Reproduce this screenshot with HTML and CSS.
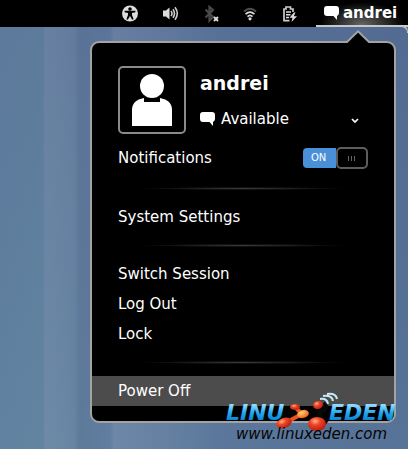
FILE: index.html
```html
<!DOCTYPE html>
<html lang="en">
<head>
    <meta charset="UTF-8">
    <meta name="viewport" content="width=device-width, initial-scale=1.0">
    <title>User Menu</title>
    <link rel="stylesheet" href="styles.css">
</head>
<body>
    <header class="panel">
        <button class="panel-icon" type="button" aria-label="Accessibility">
            <svg width="18" height="18" viewBox="0 0 18 18">
                <circle cx="9" cy="8.5" r="8" fill="#ddd"/>
                <circle cx="9" cy="4" r="1.8" fill="#000"/>
                <path d="M3.6 5.8 L14.4 5.8 L14.4 7.2 L11 8 L11 10 L12.6 14.2 L11.2 14.8 L9 11 L6.8 14.8 L5.4 14.2 L7 10 L7 8 L3.6 7.2 Z" fill="#000"/>
            </svg>
        </button>
        <button class="panel-icon" type="button" aria-label="Volume">
            <svg width="18" height="18" viewBox="0 0 18 18">
                <path d="M2 5.5 H5 L8.5 2.5 V14.5 L5 11.5 H2 Z" fill="#ddd"/>
                <path d="M10 6 Q12 8.5 10 11 M12 4.3 Q15 8.5 12 12.7 M14 2.3 Q18.6 8.5 14 14.7" fill="none" stroke="#ccc" stroke-width="1.6"/>
            </svg>
        </button>
        <button class="panel-icon" type="button" aria-label="Bluetooth off">
            <svg width="18" height="18" viewBox="0 0 18 18">
                <path d="M4.5 4.5 L12 12 L8.5 15.5 V2 L12 5 L4.5 12.5" fill="none" stroke="#494949" stroke-width="2.2"/>
                <path d="M13 12 L17 16 M17 12 L13 16" stroke="#ddd" stroke-width="1.9"/>
            </svg>
        </button>
        <button class="panel-icon" type="button" aria-label="Wireless network">
            <svg width="18" height="18" viewBox="0 0 18 18">
                <path d="M3 6.5 Q9 1 15 6.5" fill="none" stroke="#505050" stroke-width="2"/>
                <path d="M4.6 9.2 Q9 5 13.4 9.2 M6.5 11.6 Q9 9.2 11.5 11.6" fill="none" stroke="#ddd" stroke-width="1.8"/>
                <circle cx="9" cy="13.8" r="1.6" fill="#ddd"/>
            </svg>
        </button>
        <button class="panel-icon" type="button" aria-label="Battery charging">
            <svg width="18" height="18" viewBox="0 0 18 18">
                <path d="M8.5 15.7 H3 V4 H5 V2 H9.5 V4 H12 V7" fill="none" stroke="#ccc" stroke-width="1.7"/>
                <path d="M5 7 H10 M5 9.7 H9.5 M5 12.4 H8" stroke="#ddd" stroke-width="1.5"/>
                <path d="M13 7.5 L8.5 12.8 H11.5 L10.5 17 L16 11.2 H12.8 L14.5 7.5 Z" fill="#ddd"/>
            </svg>
        </button>
        <button class="panel-user" type="button">
            <svg width="15" height="14" viewBox="0 0 15 14">
                <path d="M3 0 H12 Q15 0 15 3 V7 Q15 9 13 10 V14 L9.5 10 H3 Q0 10 0 7 V3 Q0 0 3 0 Z" fill="#fff"/>
            </svg>
            <span>andrei</span>
        </button>
    </header>

    <main class="menu">
        <svg class="menu-arrow" width="26" height="14" viewBox="0 0 26 14">
            <path d="M1 14 L1 13 L2 12 L13 1 L24 12 L25 13 V14 Z" fill="#000"/>
            <path d="M0 12 H2 L13 1.4 L24 12 H26" fill="none" stroke="#a3a3a3" stroke-width="2"/>
        </svg>

        <section class="user">
            <div class="avatar">
                <svg width="40" height="52" viewBox="0 0 40 52">
                    <circle cx="20" cy="12" r="12" fill="#fff"/>
                    <path d="M0 52 V36 Q0 26 12 24 V28 H28 V24 Q40 26 40 36 V52 Z" fill="#fff"/>
                </svg>
            </div>
            <div class="user-info">
                <h1 class="user-name">andrei</h1>
                <label class="status">
                    <svg width="15" height="14" viewBox="0 0 15 14">
                        <path d="M3 0 H12 Q15 0 15 3 V7 Q15 9 13 10 V14 L9.5 10 H3 Q0 10 0 7 V3 Q0 0 3 0 Z" fill="#fff"/>
                    </svg>
                    <select class="status-select" aria-label="Status">
                        <option>Available</option>
                        <option>Busy</option>
                    </select>
                    <svg width="8" height="8" viewBox="0 0 8 8">
                        <path d="M1 4 L4 7 L7 4" fill="none" stroke="#fff" stroke-width="1.7"/>
                    </svg>
                </label>
            </div>
        </section>

        <label class="notifications">
            <span>Notifications</span>
            <input class="switch-input" type="checkbox" role="switch" checked>
            <span class="switch">
                <span class="switch-on">ON</span>
                <span class="switch-handle"><i></i><i></i><i></i></span>
            </span>
        </label>

        <hr class="separator">
        <button class="item" type="button">System Settings</button>
        <hr class="separator">
        <button class="item" type="button">Switch Session</button>
        <button class="item" type="button">Log Out</button>
        <button class="item" type="button">Lock</button>
        <hr class="separator">
        <button class="item active" type="button">Power Off</button>
    </main>

    <!-- site watermark -->
    <svg class="watermark" width="178" height="52" viewBox="0 0 178 52">
        <defs>
            <linearGradient id="blue" x1="0" y1="0" x2="0" y2="1">
                <stop offset="0.2" stop-color="#8edcff"/>
                <stop offset="0.5" stop-color="#25a9ee"/>
                <stop offset="0.8" stop-color="#0787d9"/>
            </linearGradient>
            <radialGradient id="red" cx="0.4" cy="0.3" r="0.7">
                <stop offset="0" stop-color="#ffb08c"/>
                <stop offset="0.4" stop-color="#ec4526"/>
                <stop offset="1" stop-color="#bd1d10"/>
            </radialGradient>
            <radialGradient id="orange" cx="0.4" cy="0.3" r="0.7">
                <stop offset="0" stop-color="#ffd06a"/>
                <stop offset="1" stop-color="#ec6420"/>
            </radialGradient>
        </defs>
        <path d="M59 33 L76 24 L70 18" fill="none" stroke="#e95427" stroke-width="4"/>
        <path d="M97 14 Q104 17 94 22 Q92 27 101 33" fill="none" stroke="#080808" stroke-width="5"/>
        <ellipse cx="58" cy="33" rx="8" ry="5" transform="rotate(-20 58 33)" fill="url(#red)"/>
        <ellipse cx="69" cy="17" rx="5" ry="3" fill="url(#red)"/>
        <ellipse cx="77" cy="24" rx="6" ry="4" transform="rotate(-15 77 24)" fill="url(#orange)"/>
        <ellipse cx="92" cy="15" rx="5" ry="4" transform="rotate(-12 92 15)" fill="url(#red)"/>
        <ellipse cx="91" cy="34" rx="9" ry="7" fill="url(#red)"/>
        <path d="M94 9 Q101 8 102 14 M97 6 Q106 5 107 11 M101 4 Q110 3 111 9" fill="none" stroke="#c8e9f8" stroke-width="2"/>
        <text class="brand" x="0" y="30">LINU</text>
        <text class="brand" x="103" y="30">EDEN</text>
        <text class="address" x="10" y="49">www.linuxeden.com</text>
    </svg>
</body>
</html>
```
FILE: styles.css
```css
* {
    box-sizing: border-box;
}
body {
    margin: 0;
    min-height: 100vh;
    position: relative;
    font-family: "DejaVu Sans", Verdana, sans-serif;
    font-size: 15px;
    color: #fff;
    background:
        linear-gradient(rgba(80, 100, 145, 0.25), rgba(100, 145, 175, 0.15)),
        linear-gradient(90deg, #607f9e 0, #61829e 43px, #6f89a6 45px, #6983a1 74px, #5d7697 80px, #60799c 110px, #6e86a6 114px, #667e9f 165px, #597398 220px, #546d92 100%);
}
button {
    border: 0;
    padding: 0;
    background: none;
    font: inherit;
    color: inherit;
    cursor: pointer;
}
svg {
    display: block;
    flex: none;
}
/* Top panel */
.panel {
    display: flex;
    justify-content: flex-end;
    height: 27px;
    background: #000;
}
.panel-icon {
    display: flex;
    justify-content: center;
    align-items: center;
    width: 40px;
}
.panel-user {
    display: flex;
    align-items: center;
    position: relative;
    gap: 4px;
    width: 92px;
    margin-left: 6px;
    padding-left: 8px;
    border-bottom: 2px solid #c8c8c8;
    font-weight: bold;
    background: radial-gradient(ellipse at 50% 100%, #666 0, #000 65%);
}
/* Rounded end of the panel */
.panel-user::after {
    content: "";
    position: absolute;
    right: 0;
    top: 100%;
    width: 8px;
    height: 6px;
    border-top: 2px solid #c8c8c8;
    border-right: 1px solid #c8c8c8;
    border-top-right-radius: 7px;
}
/* Menu */
.menu {
    position: relative;
    max-width: 306px;
    margin: 14px 12px 0 auto;
    padding: 23px 0 15px;
    border: 2px solid #a3a3a3;
    border-radius: 9px;
    background: #000;
}
.menu-arrow {
    position: absolute;
    top: -13px;
    right: 23px;
}
.user {
    display: flex;
    gap: 14px;
    padding: 0 26px;
    margin-bottom: 9px;
}
.avatar {
    display: flex;
    justify-content: center;
    align-items: center;
    width: 68px;
    height: 68px;
    border: 2px solid #8a8a8a;
    border-radius: 5px;
}
.user-info {
    flex: 1;
    display: flex;
    flex-direction: column;
    justify-content: space-between;
}
.user-name {
    margin: 0;
    font-size: 19px;
    line-height: 34px;
}
.status {
    display: flex;
    align-items: center;
    gap: 6px;
    height: 30px;
    padding-right: 9px;
}
.status-select {
    flex: 1;
    appearance: none;
    border: 0;
    padding: 0;
    background: #000;
    font: inherit;
    color: inherit;
}
.notifications {
    display: flex;
    justify-content: space-between;
    align-items: center;
    position: relative;
    height: 30px;
    margin-bottom: 14px;
    padding: 0 26px;
}
.switch-input {
    position: absolute;
    right: 26px;
    width: 65px;
    height: 22px;
    margin: 0;
    opacity: 0;
}
.switch {
    display: flex;
    align-items: center;
    width: 65px;
    height: 22px;
}
.switch-on {
    width: 33px;
    height: 20px;
    padding-left: 8px;
    border-radius: 4px 0 0 4px;
    background: #4a90d9;
    font-size: 10px;
    line-height: 20px;
}
.switch-handle {
    display: flex;
    justify-content: center;
    align-items: center;
    gap: 2px;
    width: 33px;
    height: 22px;
    border: 2px solid #5d5d5d;
    border-radius: 5px;
}
.switch-handle i {
    width: 1px;
    height: 5px;
    background: #666;
}
.separator {
    height: 3px;
    margin: 12px 48px;
    border: 0;
    background: radial-gradient(ellipse closest-side, #383838, #000);
}
.item {
    display: block;
    width: 100%;
    height: 30px;
    padding: 0 26px;
    text-align: left;
}
.item.active,
.item:hover {
    background: #4c4c4c;
}
/* Watermark lies over the page corner */
.watermark {
    position: absolute;
    right: 4px;
    bottom: 7px;
    overflow: visible;
}
.brand {
    font-size: 22px;
    font-weight: bold;
    font-style: italic;
    fill: url(#blue);
}
.address {
    font-size: 15px;
    font-style: italic;
    fill: #050505;
}
```
